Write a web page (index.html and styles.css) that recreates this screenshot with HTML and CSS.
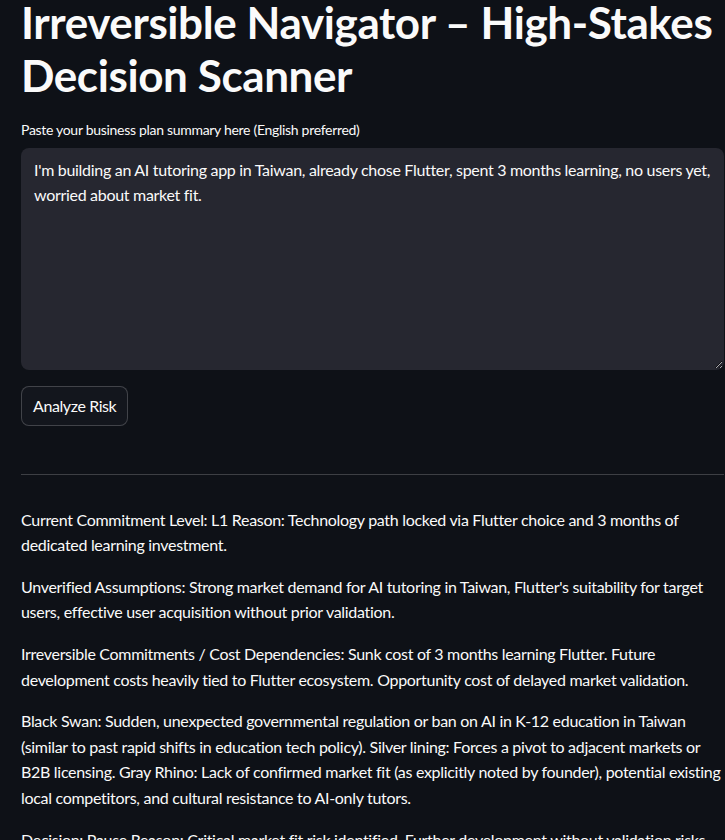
FILE: index.html
```html
<!DOCTYPE html>
<html lang="en">
<head>
    <meta charset="UTF-8">
    <meta name="viewport" content="width=device-width, initial-scale=1.0">
    <title>Irreversible Navigator</title>
    <link rel="stylesheet" href="styles.css">
</head>
<body>
    <main class="main-block">
        <h1 class="page-title">Irreversible Navigator – High-Stakes Decision Scanner</h1>

        <div class="text-input">
            <label class="input-label" for="plan">Paste your business plan summary here (English preferred)</label>
            <textarea class="plan-area" id="plan">I'm building an AI tutoring app in Taiwan, already chose Flutter, spent 3 months learning, no users yet, worried about market fit.</textarea>
        </div>

        <div class="button-row">
            <button class="btn-secondary" type="button">Analyze Risk</button>
        </div>

        <hr class="divider">

        <!-- Analysis output -->
        <div class="result">
            <p>Current Commitment Level: L1 Reason: Technology path locked via Flutter choice and 3 months of dedicated learning investment.</p>
            <p>Unverified Assumptions: Strong market demand for AI tutoring in Taiwan, Flutter's suitability for target users, effective user acquisition without prior validation.</p>
            <p>Irreversible Commitments / Cost Dependencies: Sunk cost of 3 months learning Flutter. Future development costs heavily tied to Flutter ecosystem. Opportunity cost of delayed market validation.</p>
            <p>Black Swan: Sudden, unexpected governmental regulation or ban on AI in K-12 education in Taiwan (similar to past rapid shifts in education tech policy). Silver lining: Forces a pivot to adjacent markets or B2B licensing. Gray Rhino: Lack of confirmed market fit (as explicitly noted by founder), potential existing local competitors, and cultural resistance to AI-only tutors.</p>
            <p>Decision: Pause Reason: Critical market fit risk identified. Further development without validation risks significant additional sunk cost and time.</p>
        </div>
    </main>
</body>
</html>
```

FILE: styles.css
```css
:root {
    --bg: #0e1117;
    --text: #fafafa;
    --input-bg: #262730;
    --border: rgba(250, 250, 250, 0.2);
    --btn-bg: #13161d;
}

* {
    margin: 0;
    padding: 0;
    box-sizing: border-box;
}

html, body {
    height: 100%;
    overflow: hidden;
}

body {
    background: var(--bg);
    color: var(--text);
    font-family: 'Lato', 'Noto Sans', sans-serif;
    font-size: 16px;
}

.main-block {
    width: 703px;
    margin-left: 21px;
    display: flex;
    flex-direction: column;
}

.page-title {
    font-size: 44px;
    font-weight: 700;
    line-height: 1.2;
    letter-spacing: -0.4px;
    margin-top: -4px;
    margin-bottom: 18px;
}

.text-input {
    display: flex;
    flex-direction: column;
}

.input-label {
    font-size: 14px;
    line-height: 20px;
    margin-bottom: 8px;
    letter-spacing: -0.3px;
}

.plan-area {
    height: 222px;
    background: var(--input-bg);
    color: var(--text);
    border: 1px solid transparent;
    border-radius: 8px;
    padding: 8px 12px;
    font-family: inherit;
    font-size: 16px;
    line-height: 1.6;
    letter-spacing: -0.3px;
    resize: vertical;
    outline: none;
}

.button-row {
    margin-top: 16px;
}

.btn-secondary {
    height: 40px;
    padding: 0 11px;
    background: var(--btn-bg);
    color: var(--text);
    border: 1px solid var(--border);
    border-radius: 8px;
    font-family: inherit;
    font-size: 16px;
    letter-spacing: -0.4px;
}

.divider {
    border: none;
    border-bottom: 1px solid var(--border);
    margin: 48px 0 32px;
}

.result p {
    line-height: 1.6;
    margin-bottom: 16px;
    letter-spacing: -0.3px;
}
```
